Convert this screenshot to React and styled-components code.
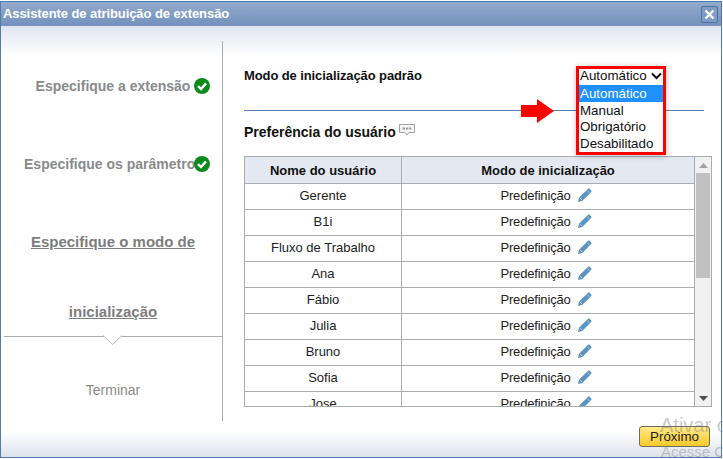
import React from "react";
import styled, { createGlobalStyle } from "styled-components";

const Global = createGlobalStyle`
  html, body { margin: 0; padding: 0; background: #fff; overflow: hidden; }
  body { font-family: "Liberation Sans", Arial, sans-serif; }
`;
const Dialog = styled.div`
  position: relative; box-sizing: border-box; width: 722px; height: 457px; margin-top: 1px;
  border: 1px solid #4f7cab; display: flex; flex-direction: column; background: #fff;
`;
const TitleBar = styled.div`
  height: 24px; flex: none; display: flex; align-items: center; justify-content: space-between;
  background: linear-gradient(#93abcc, #7391bc); padding: 0 3px 0 2px; letter-spacing: -0.08px;
  color: #fff; font-weight: bold; font-size: 13px; font-family: "Liberation Sans", sans-serif;
`;
const TitleText = styled.span` margin-top: -1px; `;
const CloseBtn = styled.div`
  width: 17px; height: 17px; box-sizing: border-box; border: 1px solid #4c6f9c; border-radius: 2px; background: #7f9cc4;
  display: flex; align-items: center; justify-content: center;
`;
const Body = styled.div`
  flex: 1; display: flex; min-height: 0; padding-top: 15px; position: relative;
  background: linear-gradient(#dfe4ef 0, #fff 30px);
`;
const Footer = styled.div`
  height: 36px; flex: none; box-sizing: border-box; display: flex; justify-content: flex-end; align-items: flex-start;
  padding: 5px 11px 0 0; background: linear-gradient(#fff 0, #fff 10px, #dde2ec 100%);
`;
const Side = styled.div`
  width: 222px; height: 380px; flex: none; box-sizing: border-box; border-right: 1px solid #a9adb2;
  display: flex; flex-direction: column; align-items: stretch;
`;
const Step = styled.div`
  height: ${p => p.$h}px; margin-top: ${p => p.$top || 0}px; display: flex; justify-content: center; align-items: center; padding-left: ${p => p.$pad || 0}px;
  color: #8a8a8a; font-size: 14px; font-weight: bold; white-space: nowrap;
`;
const StepIcon = styled.svg`
  width: 16px; height: 16px; flex: none; margin-left: ${p => p.$ml}px; position: relative;
`;
const Current = styled.div`
  margin-top: 28px; height: 129px; box-sizing: border-box; padding: 0 13px 0 16px;
  text-align: center; color: #7d7d7d; font-size: 15px; font-weight: bold; line-height: 70px; text-decoration: underline;
`;
const DividerRow = styled.div`
  position: relative; height: 1px; margin-left: 3px; background: #a9adb2;
`;
const Notch = styled.svg`
  position: absolute; left: 99px; top: -1px; width: 20px; height: 11px;
`;
const Last = styled.div`
  margin-top: 44px; padding-left: 3px; text-align: center; font-size: 14px; color: #8a8a8a; line-height: 18px;
`;
const Main = styled.div`
  flex: 1; min-width: 0; padding: 13px 0 0 21px; display: flex; flex-direction: column;
`;
const ModeLabel = styled.div`
  font-size: 13px; font-weight: bold; color: #111; line-height: 16px; height: 29px; padding-top: 14px; letter-spacing: -0.1px;
`;
const Rule = styled.div`
  width: 460px; height: 1px; background: #5c80ab; flex: none; margin-top: 13px;
`;
const PrefRow = styled.div`
  margin-top: 13px; display: flex; align-items: center; gap: 3px; font-size: 14px; font-weight: bold; color: #111; height: 16px;
`;
const Bubble = styled.svg` width: 16px; height: 12px; margin-top: -5px; `;
const TableWrap = styled.div`
  margin-top: 16px; width: 468px; height: 251px; box-sizing: border-box; overflow: hidden; position: relative;
  border: 1px solid #a9adb2; display: flex;
`;
const TableClip = styled.div` flex: 1; min-width: 0; overflow: hidden; `;
const Table = styled.table`
  width: 100%; border-collapse: collapse; table-layout: fixed; font-size: 13px; color: #222;
`;
const Th = styled.th`
  height: 26px; padding: 0; background: #e4e9f1; border-bottom: 1px solid #a9adb2; border-right: 1px solid #a9adb2;
  font-size: 13px; font-weight: bold; color: #111; width: ${p => p.$w || "auto"};
`;
const Td = styled.td`
  height: 23px; padding: 0 0 2px; text-align: center; border-bottom: 1px solid #a9adb2; border-right: 1px solid #a9adb2;
`;
const ModeCell = styled(Td)`
  padding-right: 4px; letter-spacing: -0.18px;
`;
const Pencil = styled.svg` width: 15px; height: 15px; vertical-align: -3px; margin-left: 6px; `;
const Scrollbar = styled.div`
  width: 16px; flex: none; background: #f1f1f1; display: flex; flex-direction: column; align-items: center;
`;
const ScrollBtn = styled.div`
  height: 16px; width: 100%; flex: none; display: flex; align-items: center; justify-content: center; color: ${p => p.$c};
  font-size: 0;
`;
const Thumb = styled.div` width: 14px; height: 105px; background: #c1c1c1; flex: none; `;
const Gap = styled.div` flex: 1; `;
const Next = styled.button`
  width: 71px; height: 21px; padding: 0; box-sizing: border-box; border: 1px solid #6d6d5f; border-radius: 3px;
  background: linear-gradient(#ffe989, #fbc92a); font: 13.33px "Liberation Sans", sans-serif; color: #222;
`;
const SelectBox = styled.div`
  position: absolute; left: 575px; top: 64px; width: 90px; height: 89px; box-sizing: border-box; border: 3px solid #f00; background: #fff;
  font-size: 13.33px; color: #111; z-index: 3; box-shadow: 0 1px 6px rgba(0,0,0,.25);
`;
const SelectHead = styled.div`
  height: 16px; box-sizing: border-box; padding: 0 0 2px 1px; display: flex; align-items: center; gap: 4px; line-height: 14px; background: #fff;
`;
const OptionList = styled.div`
  height: 67px; overflow: hidden;
`;
const Option = styled.div`
  height: 16.6px; box-sizing: border-box; padding: 1px 0 0 1px; line-height: 16px; background: ${p => p.$on ? "#1e90ff" : "#fff"}; color: ${p => p.$on ? "#fff" : "#111"};
`;
const Arrow = styled.svg`
  position: absolute; left: 520px; top: 97px; width: 33px; height: 24px; z-index: 2;
`;
const Watermark = styled.div`
  position: absolute; left: ${p => p.$l}px; top: ${p => p.$t}px; font-size: ${p => p.$s}px; color: rgba(120,120,120,.4); white-space: nowrap; z-index: 4; pointer-events: none;
`;

const Check = ({ ml }) => (
  <StepIcon $ml={ml} viewBox="0 0 16 16">
    <circle cx="8" cy="8" r="8" fill="#0b8a1c" />
    <path d="M4 8.2 7 11 12 5.4" fill="none" stroke="#fff" strokeWidth="2.4" />
  </StepIcon>
);
const PencilIcon = () => (
  <Pencil viewBox="0 0 15 15">
    <path d="M1 14l1-4.2L10.8 1c.6-.6 1.4-.6 2 0l1.2 1.2c.6.6.6 1.4 0 2L5.2 13z" fill="#5b93c2" />
    <path d="M3 10l2 2M10.2 2.6l2.2 2.2" stroke="#cfe0ee" strokeWidth="0.8" />
  </Pencil>
);
const users = ["Gerente", "B1i", "Fluxo de Trabalho", "Ana", "Fábio", "Julia", "Bruno", "Sofia", "Jose"];

export default function App() {
  return (
    <>
      <Global />
      <Dialog>
        <TitleBar>
          <TitleText>Assistente de atribuição de extensão</TitleText>
          <CloseBtn>
            <svg width="11" height="11" viewBox="0 0 11 11"><path d="M1.5 1.5l8 8M9.5 1.5l-8 8" stroke="#fff" strokeWidth="2.4" /></svg>
          </CloseBtn>
        </TitleBar>
        <Body>
          <Side>
            <Step $h={48} $top={21} $pad={23}>Especifique a extensão<Check ml={4} /></Step>
            <Step $h={30} $top={39} $pad={11}>Especifique os parâmetros<Check ml={-9} /></Step>
            <Current>Especifique o modo de inicialização</Current>
            <DividerRow>
              <Notch viewBox="0 0 20 11">
                <path d="M0 .5 9.5 9.5 19 .5" fill="#fff" stroke="#bbb" />
              </Notch>
            </DividerRow>
            <Last>Terminar</Last>
          </Side>
          <Main>
            <ModeLabel>Modo de inicialização padrão</ModeLabel>
            <Rule />
            <PrefRow>
              Preferência do usuário
              <Bubble viewBox="0 0 16 12">
                <path d="M.5.5h15v8h-5.5l-2 2.5-2-2.5h-5.500z" fill="#f6f6f6" stroke="#a0a0a0" />
                <path d="M3.500 4.500h9" stroke="#a0a0a0" strokeWidth="2" strokeDasharray="2.500 .8" />
              </Bubble>
            </PrefRow>
            <TableWrap>
              <TableClip>
                <Table>
                  <thead>
                    <tr><Th $w="156px">Nome do usuário</Th><Th>Modo de inicialização</Th></tr>
                  </thead>
                  <tbody>
                    {users.map(u => (
                      <tr key={u}><Td>{u}</Td><ModeCell>Predefinição<PencilIcon /></ModeCell></tr>
                    ))}
                  </tbody>
                </Table>
              </TableClip>
              <Scrollbar>
                <ScrollBtn $c="#a3a3a3"><svg width="9" height="5"><path d="M0 5 4.500 0 9 5z" fill="currentColor" /></svg></ScrollBtn>
                <Thumb />
                <Gap />
                <ScrollBtn $c="#505050"><svg width="9" height="5"><path d="M0 0 4.500 5 9 0z" fill="currentColor" /></svg></ScrollBtn>
              </Scrollbar>
            </TableWrap>
          </Main>
        </Body>
        <Footer><Next>Próximo</Next></Footer>
        <SelectBox>
          <SelectHead>
            Automático
            <svg width="11" height="8" viewBox="0 0 11 8"><path d="M1 1.500 5.500 6 10 1.500" fill="none" stroke="#111" strokeWidth="2" /></svg>
          </SelectHead>
          <OptionList>
            <Option $on>Automático</Option>
            <Option>Manual</Option>
            <Option>Obrigatório</Option>
            <Option>Desabilitado</Option>
          </OptionList>
        </SelectBox>
        <Arrow viewBox="0 0 33 24">
          <path d="M0 6h16V0l17 12L16 24v-6H0z" fill="#f00" />
        </Arrow>
        <Watermark $l={659} $t={412} $s={20}>Ativar o</Watermark>
        <Watermark $l={660} $t={441} $s={15}>Acesse Co</Watermark>
      </Dialog>
    </>
  );
}
